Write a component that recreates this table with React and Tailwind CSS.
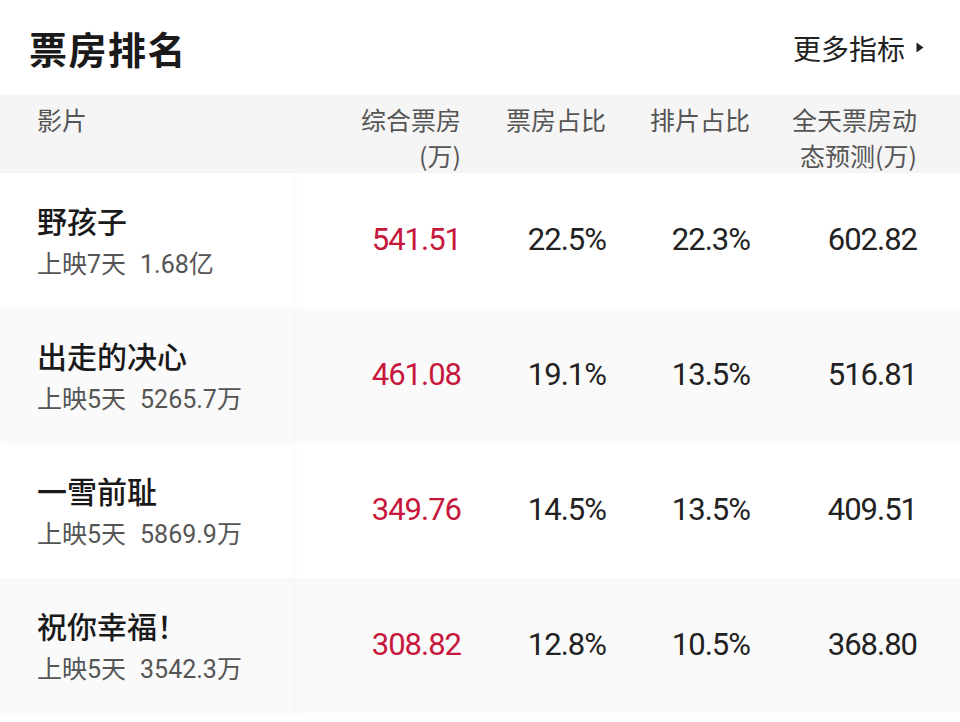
import React from "react";

const rows = [
  { name: "野孩子", sub: "上映7天", total: "1.68亿", bo: "541.51", share: "22.5%", sched: "22.3%", pred: "602.82" },
  { name: "出走的决心", sub: "上映5天", total: "5265.7万", bo: "461.08", share: "19.1%", sched: "13.5%", pred: "516.81" },
  { name: "一雪前耻", sub: "上映5天", total: "5869.9万", bo: "349.76", share: "14.5%", sched: "13.5%", pred: "409.51" },
  { name: "祝你幸福！", sub: "上映5天", total: "3542.3万", bo: "308.82", share: "12.8%", sched: "10.5%", pred: "368.80" },
];

const cjk = { fontFamily: '"Noto Sans CJK SC", "Noto Sans", sans-serif' };
const num = { fontFamily: 'Roboto, "Noto Sans CJK SC", sans-serif' };

export default function App() {
  return (
    <div className="w-[960px] h-[722px] bg-white overflow-hidden" style={cjk}>
      <div className="h-[95px] flex items-center justify-between pl-[29px] pr-[36px]">
        <div className="text-[38px] font-bold text-[#1a1a1a] tracking-[1.5px] leading-none">票房排名</div>
        <div className="flex items-center gap-[11px] text-[28px] text-[#222] leading-none">
          <span>更多指标</span>
          <svg width="8" height="11" viewBox="0 0 8 11"><path d="M0.5 0.5 L7.5 5.5 L0.5 10.5 Z" fill="#222" /></svg>
        </div>
      </div>
      <div className="grid grid-cols-[292px_169px_145px_144px_167px_43px] bg-[#f5f5f5] h-[78px] text-[25px] leading-[36px] text-[#555]">
        <div className="pl-[37px] pt-[6px]">影片</div>
        <div className="text-right pt-[6px] flex flex-col">
          <span>综合票房</span>
          <span>(万)</span>
        </div>
        <div className="text-right pt-[6px]">票房占比</div>
        <div className="text-right pt-[6px]">排片占比</div>
        <div className="text-right pt-[6px] flex flex-col">
          <span>全天票房动</span>
          <span>态预测(万)</span>
        </div>
        <div />
      </div>
      {rows.map((r, i) => (
        <div
          key={i}
          className={`grid grid-cols-[292px_169px_145px_144px_167px_43px] h-[135px] items-center ${i % 2 === 1 ? "bg-[#fafafa]" : "bg-white"}`}
        >
          <div className="pl-[37px] h-full flex flex-col justify-center gap-[6px] shadow-[3px_0_6px_rgba(0,0,0,0.025)]">
            <div className="text-[30px] leading-[42px] font-medium text-[#1a1a1a]">{r.name}</div>
            <div className="text-[25px] leading-[36px] text-[#555] flex gap-[14px]" style={num}>
              <span>{r.sub}</span>
              <span>{r.total}</span>
            </div>
          </div>
          <div className="text-right text-[31px] tracking-[-1px] text-[#c8173c]" style={num}>{r.bo}</div>
          <div className="text-right text-[31px] tracking-[-1px] text-[#222]" style={num}>{r.share}</div>
          <div className="text-right text-[31px] tracking-[-1px] text-[#222]" style={num}>{r.sched}</div>
          <div className="text-right text-[31px] tracking-[-1px] text-[#222]" style={num}>{r.pred}</div>
          <div />
        </div>
      ))}
    </div>
  );
}
